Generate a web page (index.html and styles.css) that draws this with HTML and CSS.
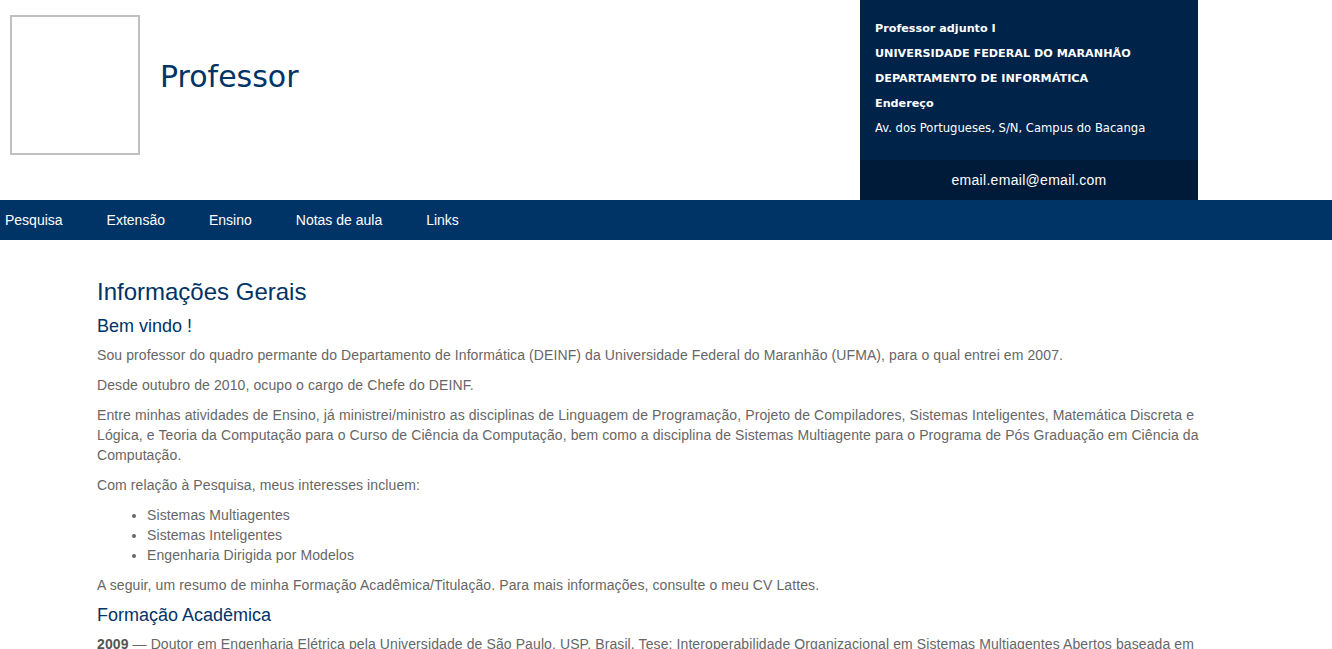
FILE: index.html
```html
<!DOCTYPE html>
<html lang="pt-BR">
<head>
<meta charset="utf-8">
<title>Professor</title>
<link rel="stylesheet" href="styles.css">
</head>
<body>
<header class="site-header">
  <div class="brand">
    <div class="photo"></div>
    <h1 class="brand-title">Professor</h1>
  </div>
  <aside class="info">
    <div class="info-body">
      <p class="info-line bold">Professor adjunto I</p>
      <p class="info-line bold">UNIVERSIDADE FEDERAL DO MARANHÃO</p>
      <p class="info-line bold">DEPARTAMENTO DE INFORMÁTICA</p>
      <p class="info-line bold">Endereço</p>
      <p class="info-line">Av. dos Portugueses, S/N, Campus do Bacanga</p>
    </div>
    <div class="info-email">email.email@email.com</div>
  </aside>
</header>
<nav class="main-nav">
  <a href="#">Pesquisa</a>
  <a href="#">Extensão</a>
  <a href="#">Ensino</a>
  <a href="#">Notas de aula</a>
  <a href="#">Links</a>
</nav>
<main class="content">
  <h3 class="h-main">Informações Gerais</h3>
  <h4 class="h-sub">Bem vindo !</h4>
  <p>Sou professor do quadro permante do Departamento de Informática (DEINF) da Universidade Federal do Maranhão (UFMA), para o qual entrei em 2007.</p>
  <p>Desde outubro de 2010, ocupo o cargo de Chefe do DEINF.</p>
  <p>Entre minhas atividades de Ensino, já ministrei/ministro as disciplinas de Linguagem de Programação, Projeto de Compiladores, Sistemas Inteligentes, Matemática Discreta e Lógica, e Teoria da Computação para o Curso de Ciência da Computação, bem como a disciplina de Sistemas Multiagente para o Programa de Pós Graduação em Ciência da Computação.</p>
  <p>Com relação à Pesquisa, meus interesses incluem:</p>
  <ul class="list">
    <li>Sistemas Multiagentes</li>
    <li>Sistemas Inteligentes</li>
    <li>Engenharia Dirigida por Modelos</li>
  </ul>
  <p>A seguir, um resumo de minha Formação Acadêmica/Titulação. Para mais informações, consulte o meu CV Lattes.</p>
  <h4 class="h-sub">Formação Acadêmica</h4>
  <p><strong>2009</strong> — Doutor em Engenharia Elétrica pela Universidade de São Paulo, USP, Brasil. Tese: Interoperabilidade Organizacional em Sistemas Multiagentes Abertos baseada em Modelos.</p>
</main>
</body>
</html>
```
FILE: styles.css
```css
html, body {
  margin: 0;
  padding: 0;
  background: #ffffff;
}

body {
  font-family: "Liberation Sans", Arial, sans-serif;
  font-size: 14px;
  line-height: 20px;
  color: #666666;
}

.site-header {
  display: grid;
  grid-template-columns: 1fr 338px;
  width: 1198px;
  height: 200px;
}

.brand {
  display: flex;
  align-items: flex-start;
  padding: 15px 0 0 10px;
}

.photo {
  width: 126px;
  height: 136px;
  border: 2px solid #c0c0c0;
  flex: none;
}

.brand-title {
  margin: 44px 0 0 20px;
  font-family: "DejaVu Sans", Verdana, sans-serif;
  font-weight: normal;
  font-size: 30px;
  line-height: 36px;
  color: #003366;
}

.info {
  display: flex;
  flex-direction: column;
  background: #00234a;
  color: #ffffff;
}

.info-body {
  height: 160px;
  box-sizing: border-box;
  padding: 16px 10px 0 15px;
}

.info-line {
  margin: 0;
  font-family: "DejaVu Sans", Verdana, sans-serif;
  font-size: 11.6px;
  line-height: 25px;
  white-space: nowrap;
}

.info-line.bold {
  font-weight: bold;
  font-size: 11.2px;
}

.info-email {
  height: 40px;
  background: #001b39;
  display: flex;
  align-items: center;
  justify-content: center;
  font-size: 14px;
  letter-spacing: 0.3px;
}

.main-nav {
  display: flex;
  gap: 44px;
  height: 40px;
  align-items: center;
  padding-left: 5px;
  background: #003366;
}

.main-nav a {
  color: #ffffff;
  text-decoration: none;
  font-size: 14px;
}

.content {
  width: 1108px;
  margin-left: 97px;
  padding-top: 19px;
  letter-spacing: 0.1px;
}

.h-main {
  margin: 20px 0 12px;
  font-size: 24px;
  line-height: 1.1;
  font-weight: normal;
  letter-spacing: 0;
  color: #003366;
}

.h-sub {
  margin: 11px 0 8px;
  font-size: 18px;
  line-height: 1.1;
  font-weight: normal;
  letter-spacing: 0;
  color: #003366;
}

.content p {
  margin: 0 0 10px;
}

.content strong {
  color: #555555;
}

.list {
  margin: 0 0 10px;
  padding-left: 50px;
}
```
